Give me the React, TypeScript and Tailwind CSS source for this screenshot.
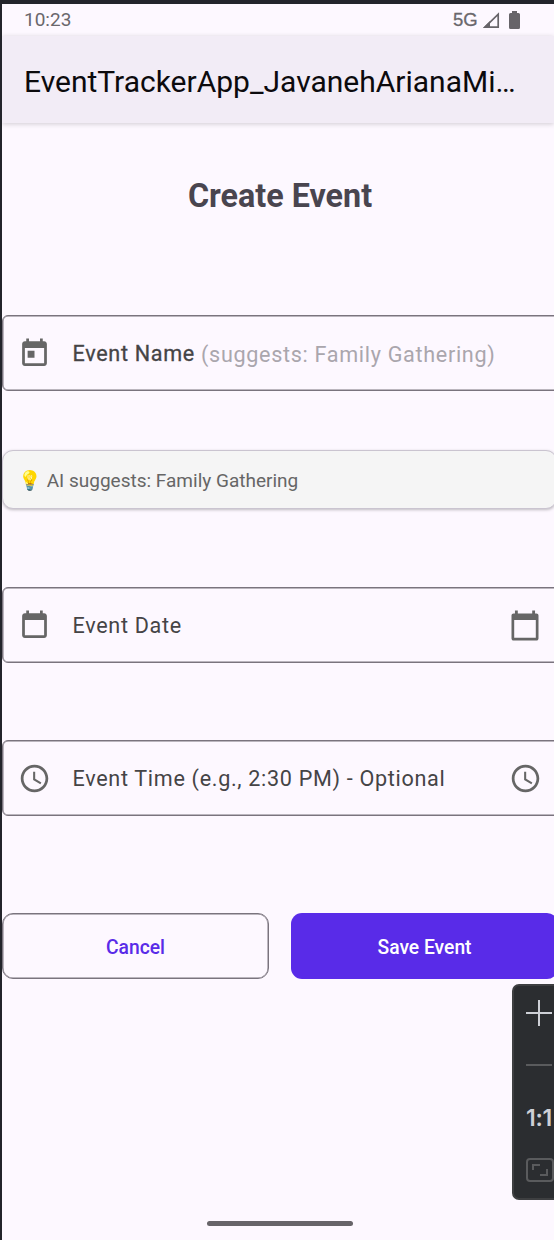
import type { ReactNode } from "react";

const CALENDAR =
  "M19 3h-1V1h-2v2H8V1H6v2H5c-1.11 0-1.99.9-1.99 2L3 19c0 1.1.89 2 2 2h14c1.1 0 2-.9 2-2V5c0-1.1-.9-2-2-2zm0 16H5V8h14v11z";
const CALENDAR_THIN =
  "M19.600 3H18.700V1h-1.900v2H7.200V1H5.300v2H4.400C3.600 3 3 3.600 3 4.400v15.200c0 .8.6 1.400 1.400 1.400h15.200c.8 0 1.400-.6 1.400-1.400V4.400c0-.8-.6-1.400-1.400-1.400zM19.200 19.200H4.800V7.300h14.400v11.900z";
const TODAY = CALENDAR + "M7 10h5v5H7z";
const CLOCK =
  "M11.99 2C6.47 2 2 6.48 2 12s4.47 10 9.99 10C17.52 22 22 17.52 22 12S17.52 2 11.99 2zM12 20c-4.42 0-8-3.58-8-8s3.58-8 8-8 8 3.58 8 8-3.58 8-8 8zM12.5 7H11v6l5.25 3.15.75-1.23-4.5-2.67z";

function Icon({ path, className }: { path: string; className: string }) {
  return (
    <svg viewBox="0 0 24 24" fill="#666" className={`shrink-0 ${className}`}>
      <path d={path} fillRule="evenodd" />
    </svg>
  );
}

function Field({ icon, trailing, className, children }: { icon: string; trailing?: ReactNode; className: string; children: ReactNode }) {
  return (
    <div className={`flex h-[76px] w-[576px] shrink-0 items-center rounded-[6px] border-[1.5px] border-[#7a747e] pl-[15px] shadow-[inset_0_0_0_0.5px_#7a747e] ${className}`}>
      <Icon path={icon} className="size-[33px]" />
      <div className="ml-[21.5px] w-[434.5px] whitespace-nowrap pt-[1px] text-[21.6px] leading-[26px] tracking-[0.68px] text-[#454446]">
        {children}
      </div>
      {trailing}
    </div>
  );
}

function StatusBar() {
  return (
    <div className="flex h-[32px] shrink-0 items-center pl-[22px] text-[19px] leading-[32px] text-[#6a676c]">
      <span className="w-[429px]">10:23</span>
      <span className="w-[30px] font-['Liberation_Sans',sans-serif] text-[18.5px] [-webkit-text-stroke:0.3px_#6a676c]">5G</span>
      <svg width="17" height="17" viewBox="0 0 17 17" className="shrink-0">
        <path d="M2 15.200 15.200 2.200v13z" fill="none" stroke="#676469" strokeWidth="1.700" />
        <path d="M0 16 7 9V16z" fill="#676469" />
      </svg>
      <svg width="11" height="18" viewBox="0 0 11 18" className="ml-[9px] shrink-0">
        <path d="M3 0h5v2h1.5q1.5 0 1.5 1.5v13q0 1.5-1.5 1.5h-8Q0 18 0 16.500v-13Q0 2 1.500 2H3z" fill="#676469" />
      </svg>
    </div>
  );
}

function ZoomPanel() {
  return (
    <div className="absolute left-[510px] top-[980px] flex h-[216px] w-[56px] flex-col rounded-[7px] border-2 border-[#3e3f41] bg-[#2b2d30] pl-[12px] text-[#ced0d6]">
      <svg width="26" height="26" viewBox="0 0 26 26" className="mt-[14px] shrink-0">
        <path d="M0 13h26M13 0v26" stroke="#ced0d6" strokeWidth="2" />
      </svg>
      <div className="mt-[38px] h-[2px] w-[26px] shrink-0 bg-[#5a5b5d]" />
      <div className="mt-[38px] h-[28px] whitespace-nowrap font-['Inter',sans-serif] text-[23px] font-semibold leading-[28px] tracking-[-0.3px]">1:1</div>
      <svg width="28" height="26" viewBox="0 0 28 26" className="mt-[25px] shrink-0" fill="none" stroke="#5a5b5d" strokeWidth="2">
        <rect x="1" y="2" width="26" height="22" rx="3" />
        <path d="M7 13V8h7M21 12v6h-7" />
      </svg>
    </div>
  );
}

export default function App() {
  return (
    <div className="relative flex h-[1240px] w-[554px] flex-col overflow-hidden border-l-2 border-t-4 border-[#23242b] bg-[#fdf8ff] font-['Roboto',sans-serif]">
      <StatusBar />
      <header className="flex h-[87px] shrink-0 items-center bg-[#f2ecf6] pl-[22px] shadow-[0_1px_5px_rgba(0,0,0,0.18)]">
        <h1 className="whitespace-nowrap pt-[4px] text-[30px] leading-[36px] text-[#0c0a0d]">EventTrackerApp_JavanehArianaMi…</h1>
      </header>
      <main className="flex flex-1 flex-col">
        <h2 className="mt-[53px] h-[40px] w-[556px] shrink-0 text-center text-[32.3px] font-bold leading-[40px] text-[#49454f]">Create Event</h2>
        <Field icon={TODAY} className="mt-[99px]">
          <span className="[-webkit-text-stroke:0.3px_#454446]">Event Name</span>
          <span className="relative top-px text-[#aaa6ad]"> (suggests: Family Gathering)</span>
        </Field>
        <div className="mt-[59px] flex h-[59px] w-[555px] shrink-0 items-center rounded-[11px] border-[1.5px] border-[#cac4d0] bg-[#f5f5f5] pl-[15px] pt-[2px] shadow-[0_1px_3px_rgba(0,0,0,0.25)]">
          <span className="whitespace-nowrap text-[19px] leading-[24px] text-[#666]">💡 AI suggests: Family Gathering</span>
        </div>
        <Field icon={CALENDAR} className="mt-[78px]" trailing={<Icon path={CALENDAR_THIN} className="mt-[3px] size-[36px]" />}>
          Event Date
        </Field>
        <Field icon={CLOCK} className="mt-[77px]" trailing={<Icon path={CLOCK} className="ml-[2px] size-[33px]" />}>
          Event Time (e.g., 2:30 PM) - Optional
        </Field>
        <div className="mt-[97px] flex h-[66px] w-[555px] shrink-0 gap-[22px] text-[19.3px] font-medium">
          <button className="w-[267px] shrink-0 rounded-[11px] border-[1.5px] border-[#7a747e] pt-[4px] text-[#592be8] shadow-[inset_0_0_0_0.5px_#7a747e]">Cancel</button>
          <button className="w-[267px] shrink-0 rounded-[11px] bg-[#592be8] pt-[4px] text-white">Save Event</button>
        </div>
        <div className="ml-[205px] mt-[242px] h-[5px] w-[146px] shrink-0 rounded-full bg-[#676469]" />
      </main>
      <ZoomPanel />
    </div>
  );
}
